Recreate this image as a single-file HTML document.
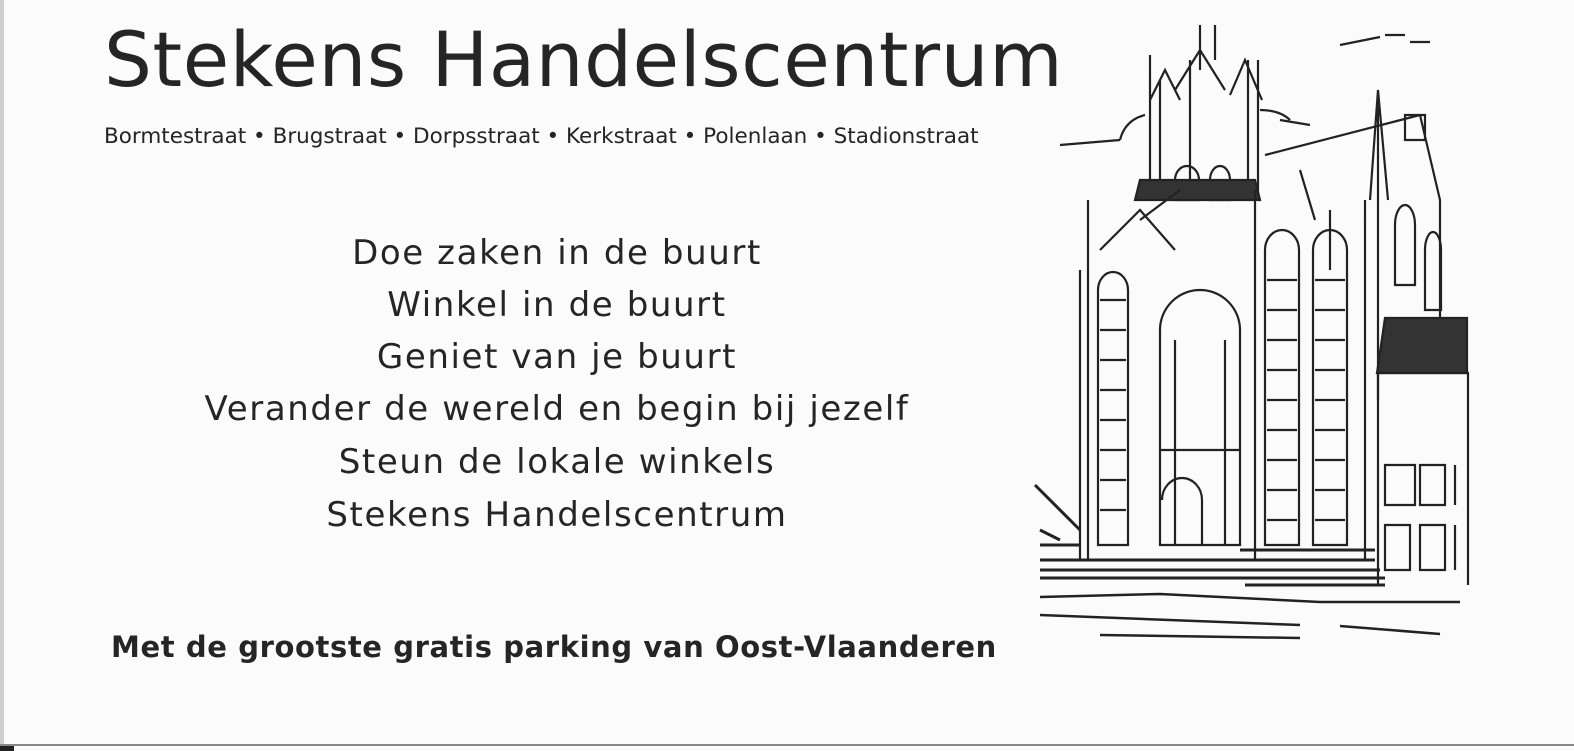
<!DOCTYPE html>
<html><head><meta charset="utf-8"><style>
body{margin:0;width:1574px;height:751px;background:#fbfbfb;position:relative;overflow:hidden;font-family:"DejaVu Sans","Liberation Sans",sans-serif;color:#252525}
.t{position:absolute;white-space:nowrap}
#title{left:104px;top:16px;font-size:75.5px;letter-spacing:0.6px}
#sub{left:104px;top:124px;font-size:21.5px}
.l{position:absolute;left:0;width:1114px;text-align:center;font-size:34px;letter-spacing:1.6px}
#bold{left:111px;top:630px;font-size:29px;font-weight:bold;letter-spacing:0.6px}
</style></head><body>
<div style="position:absolute;left:0;top:0;width:4px;height:751px;background:#cfcfcf"></div>
<div style="position:absolute;left:0;top:744px;width:1574px;height:2px;background:#888"></div>
<div style="position:absolute;left:0;top:746px;width:14px;height:5px;background:#222"></div>
<div class="t" id="title">Stekens Handelscentrum</div>
<div class="t" id="sub">Bormtestraat • Brugstraat • Dorpsstraat • Kerkstraat • Polenlaan • Stadionstraat</div>
<div class="l" style="top:233px">Doe zaken in de buurt</div>
<div class="l" style="top:285px">Winkel in de buurt</div>
<div class="l" style="top:337px">Geniet van je buurt</div>
<div class="l" style="top:389px">Verander de wereld en begin bij jezelf</div>
<div class="l" style="top:442px">Steun de lokale winkels</div>
<div class="l" style="top:495px">Stekens Handelscentrum</div>
<div class="t" id="bold">Met de grootste gratis parking van Oost-Vlaanderen</div>
<svg width="1574" height="751" style="position:absolute;left:0;top:0" fill="none" stroke="#222" stroke-width="2.2">
<path d="M1150 55V200M1160 80V200M1190 60V190M1215 25V60M1248 60V200M1258 60V200M1200 25V70M1175 90L1200 50L1225 90M1230 95L1245 60L1262 100M1150 100L1165 70L1180 100"/>
<path d="M1175 180a12 14 0 0 1 24 0v20h-24zM1210 180a10 14 0 0 1 20 0v20h-20z"/>
<path d="M1060 145L1120 140M1120 140q5-20 25-25M1260 110q20 0 30 10M1280 120l30 5M1340 45l40-8M1385 35h20M1410 42h20"/>
<path d="M1140 180h115l5 20h-125z" fill="#333"/>
<path d="M1080 270V560M1088 200V560M1100 250l40-40 35 40M1140 220l40-30M1265 155L1420 115M1255 190V560M1365 200V560M1378 90V400M1370 200L1378 90L1388 200M1420 115L1440 200V330M1405 115h20v25h-20zM1300 170l15 50M1330 210V270"/>
<path d="M1098 290a15 18 0 0 1 30 0V545h-30zM1160 330a40 40 0 0 1 80 0V545h-80zM1175 340V545M1225 340V545M1265 250a17 20 0 0 1 34 0V545h-34zM1313 250a17 20 0 0 1 34 0V545h-34z"/>
<path d="M1100 300h26M1100 330h26M1100 360h26M1100 390h26M1100 420h26M1100 450h26M1100 480h26M1100 510h26M1267 280h30M1267 310h30M1267 340h30M1267 370h30M1267 400h30M1267 430h30M1267 460h30M1267 490h30M1267 520h30M1315 280h30M1315 310h30M1315 340h30M1315 370h30M1315 400h30M1315 430h30M1315 460h30M1315 490h30M1315 520h30M1160 450h80M1162 500a20 22 0 0 1 40 0v45"/>
<path d="M1395 225a10 20 0 0 1 20 0v60h-20zM1425 250a8 18 0 0 1 16 0v60h-16z"/>
<path d="M1385 318h82v55h-90z" fill="#333"/>
<path d="M1378 373h90V585M1378 373V585M1385 465h30v40h-30zM1420 465h25v40h-25zM1385 525h25v45h-25zM1420 525h25v45h-25zM1455 465v40M1455 525v45"/>
<path d="M1040 560h335M1040 570h340M1040 578h345M1240 550h135M1245 585h140M1040 545h40M1040 530l20 10M1035 485l45 45" stroke-width="3"/>
<path d="M1040 597l120-3 160 8h140M1040 615l260 10M1100 635l200 3M1340 626l100 8" stroke-width="2.5"/>
</svg>
</body></html>
